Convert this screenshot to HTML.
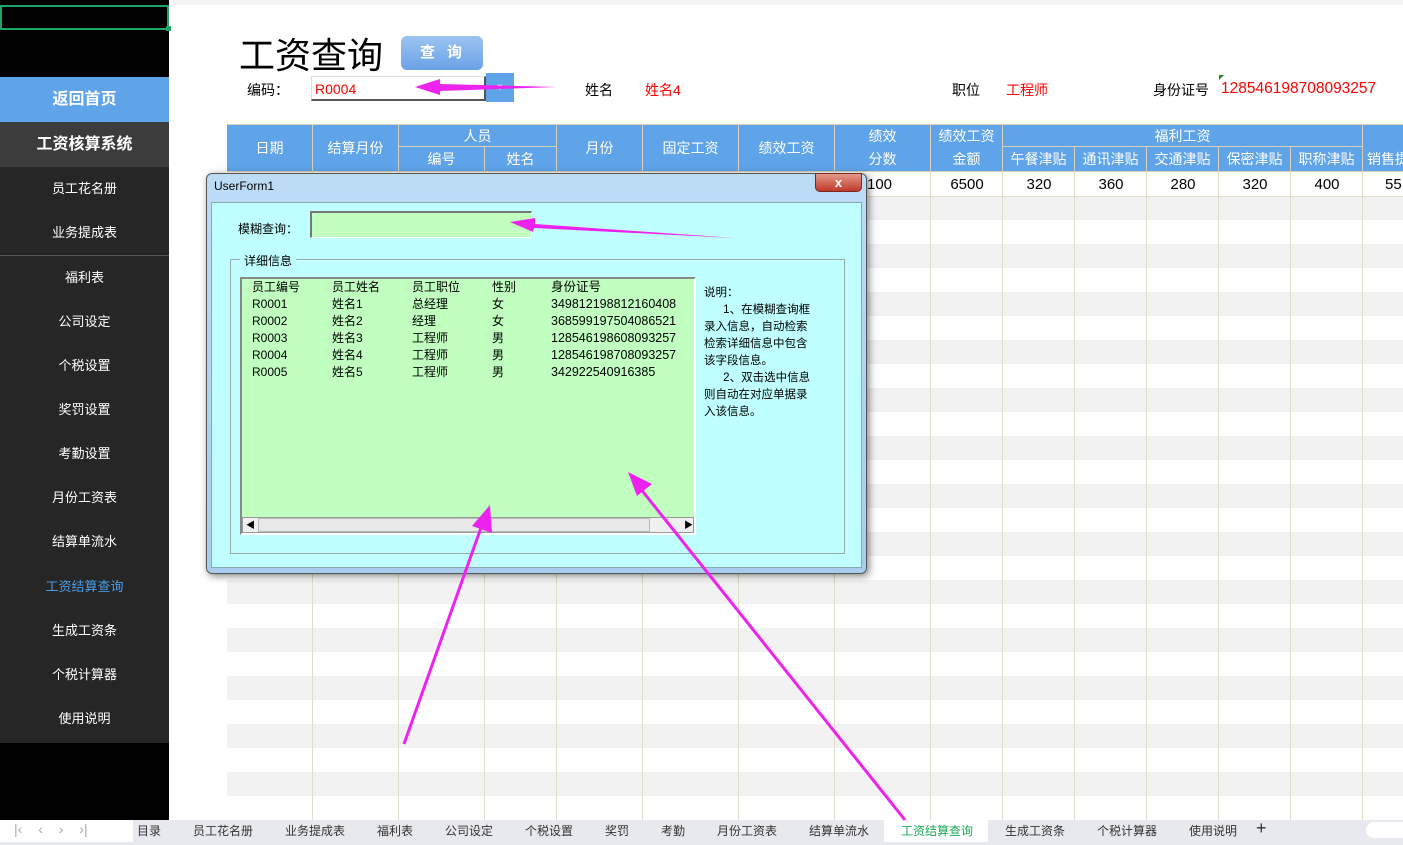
<!DOCTYPE html><html><head><meta charset="utf-8"><style>
*{margin:0;padding:0;box-sizing:border-box}
body{width:1403px;height:845px;overflow:hidden;background:#fff;font-family:"Liberation Sans","Noto Sans CJK SC",sans-serif;position:relative}
.a{position:absolute}
.side{left:0;top:0;width:169px;height:820px;background:#000}
.mi{position:absolute;left:0;width:169px;height:44px;line-height:44px;text-align:center;color:#fff;font-size:13px;background:#262626}
.grid div{position:absolute}
.vl{top:172px;width:1px;height:648px;background:#e2dccb}
.hd{background:#5fa3e8;color:#fff;font-size:14px;text-align:center;border-right:1px solid #d8d0b8;border-bottom:1px solid #d8d0b8}
.dlg{left:206px;top:173px;width:661px;height:401px;background:linear-gradient(#bcdcf6,#a9cdee);border:1px solid #555;border-radius:6px;box-shadow:2px 2px 8px rgba(0,0,0,.5)}
.tab{position:absolute;top:822px;font-size:12px;color:#333}
</style></head><body>
<div class="a" style="left:0;top:0;width:1403px;height:5px;background:#f3f4f6"></div>
<div class="a side"></div>
<div class="a" style="left:0;top:5px;width:169px;height:25px;border:2px solid #21a366;background:#000"></div>
<div class="a" style="left:166px;top:26px;width:5px;height:5px;background:#21a366"></div>
<div class="mi" style="top:77px;height:45px;line-height:45px;background:#5fa3e8;font-size:16px;font-weight:bold">返回首页</div>
<div class="mi" style="top:122px;height:45px;line-height:45px;background:#3c3c3c;font-size:16px;font-weight:bold">工资核算系统</div>
<div class="mi" style="top:167px">员工花名册</div>
<div class="mi" style="top:211px">业务提成表</div>
<div class="a" style="left:0;top:255px;width:169px;height:1px;background:#555"></div>
<div class="mi" style="top:256px">福利表</div>
<div class="mi" style="top:300px">公司设定</div>
<div class="mi" style="top:344px">个税设置</div>
<div class="mi" style="top:388px">奖罚设置</div>
<div class="mi" style="top:432px">考勤设置</div>
<div class="mi" style="top:476px">月份工资表</div>
<div class="mi" style="top:520px">结算单流水</div>
<div class="mi" style="top:564px;height:45px;line-height:45px;color:#4a9ee8">工资结算查询</div>
<div class="mi" style="top:609px">生成工资条</div>
<div class="mi" style="top:653px">个税计算器</div>
<div class="mi" style="top:697px;height:46px">使用说明</div>

<div class="a" style="left:239px;top:27px;font-size:36px;color:#000">工资查询</div>
<div class="a" style="left:401px;top:36px;width:82px;height:34px;border-radius:6px;background:linear-gradient(#9cc4f2,#6aa2e6);color:#fff;font-size:15px;font-weight:bold;text-align:center;line-height:34px;letter-spacing:12px;padding-left:10px">查询</div>
<div class="a" style="left:247px;top:80px;font-size:14px">编码：</div>
<div class="a" style="left:311px;top:76px;width:175px;height:25px;border:1px solid #ddd;border-right:2px solid #555;border-bottom:2px solid #555;color:#f00;font-size:14px;padding:4px 3px">R0004</div>
<div class="a" style="left:486px;top:73px;width:28px;height:29px;background:#5fa3e8;color:#fff;font-size:9px;text-align:center;line-height:29px">▼</div>
<div class="a" style="left:585px;top:80px;font-size:14px">姓名</div>
<div class="a" style="left:645px;top:80px;font-size:14px;color:#f00">姓名4</div>
<div class="a" style="left:952px;top:80px;font-size:14px">职位</div>
<div class="a" style="left:1006px;top:80px;font-size:14px;color:#f00">工程师</div>
<div class="a" style="left:1153px;top:80px;font-size:14px">身份证号</div>
<div class="a" style="left:1219px;top:75px;width:0;height:0;border-top:5px solid #1a8a1a;border-right:5px solid transparent"></div>
<div class="a" style="left:1221px;top:80px;font-size:15.5px;color:#f00">128546198708093257</div>

<!-- grid -->
<div class="grid">
<div style="left:227px;top:172px;width:1176px;height:648px;background:repeating-linear-gradient(#fff 0 24px,#f2f2f2 24px 48px)"></div>
<div class="vl" style="left:312px"></div><div class="vl" style="left:398px"></div><div class="vl" style="left:484px"></div>
<div class="vl" style="left:556px"></div><div class="vl" style="left:642px"></div><div class="vl" style="left:738px"></div>
<div class="vl" style="left:834px"></div><div class="vl" style="left:930px"></div><div class="vl" style="left:1002px"></div>
<div class="vl" style="left:1074px"></div><div class="vl" style="left:1146px"></div><div class="vl" style="left:1218px"></div>
<div class="vl" style="left:1290px"></div><div class="vl" style="left:1362px"></div>
<div style="left:227px;top:196px;width:1176px;height:1px;background:#e2dccb"></div>
<div style="left:227px;top:124px;width:1176px;height:48px;background:#5fa3e8;border-top:1px solid #d8d0b8"></div>
<div class="hd" style="left:227px;top:125px;width:86px;height:47px;line-height:47px">日期</div>
<div class="hd" style="left:313px;top:125px;width:86px;height:47px;line-height:47px">结算月份</div>
<div class="hd" style="left:399px;top:125px;width:158px;height:22px;line-height:22px">人员</div>
<div class="hd" style="left:399px;top:147px;width:86px;height:25px;line-height:25px">编号</div>
<div class="hd" style="left:485px;top:147px;width:72px;height:25px;line-height:25px">姓名</div>
<div class="hd" style="left:557px;top:125px;width:86px;height:47px;line-height:47px">月份</div>
<div class="hd" style="left:643px;top:125px;width:96px;height:47px;line-height:47px">固定工资</div>
<div class="hd" style="left:739px;top:125px;width:96px;height:47px;line-height:47px">绩效工资</div>
<div class="hd" style="left:835px;top:125px;width:96px;height:47px;line-height:23px">绩效<br>分数</div>
<div class="hd" style="left:931px;top:125px;width:72px;height:47px;line-height:23px">绩效工资<br>金额</div>
<div class="hd" style="left:1003px;top:125px;width:360px;height:22px;line-height:22px">福利工资</div>
<div class="hd" style="left:1003px;top:147px;width:72px;height:25px;line-height:25px">午餐津贴</div>
<div class="hd" style="left:1075px;top:147px;width:72px;height:25px;line-height:25px">通讯津贴</div>
<div class="hd" style="left:1147px;top:147px;width:72px;height:25px;line-height:25px">交通津贴</div>
<div class="hd" style="left:1219px;top:147px;width:72px;height:25px;line-height:25px">保密津贴</div>
<div class="hd" style="left:1291px;top:147px;width:72px;height:25px;line-height:25px">职称津贴</div>
<div class="hd" style="left:1363px;top:147px;width:60px;height:25px;line-height:25px;text-align:left;padding-left:4px">销售提</div>
<div style="left:867px;top:176px;font-size:15px">100</div>
<div style="left:931px;top:176px;width:72px;text-align:center;font-size:15px">6500</div>
<div style="left:1003px;top:176px;width:72px;text-align:center;font-size:15px">320</div>
<div style="left:1075px;top:176px;width:72px;text-align:center;font-size:15px">360</div>
<div style="left:1147px;top:176px;width:72px;text-align:center;font-size:15px">280</div>
<div style="left:1219px;top:176px;width:72px;text-align:center;font-size:15px">320</div>
<div style="left:1291px;top:176px;width:72px;text-align:center;font-size:15px">400</div>
<div style="left:1385px;top:176px;font-size:15px">55</div>
</div>

<!-- dialog -->
<div class="a dlg"></div>
<div class="a" style="left:214px;top:179px;font-size:12px;color:#000">UserForm1</div>
<div class="a" style="left:815px;top:173px;width:47px;height:19px;border-radius:0 0 5px 5px;background:linear-gradient(#e39a8a,#c0392b);border:1px solid #7a2a20;color:#fff;font-weight:bold;font-size:13px;text-align:center;line-height:17px">x</div>
<div class="a" style="left:211px;top:202px;width:651px;height:366px;background:#c0ffff;border:1px solid #8aa"></div>
<div class="a" style="left:238px;top:220px;font-size:12px">模糊查询：</div>
<div class="a" style="left:310px;top:211px;width:222px;height:27px;background:#c0ffc0;border:1px solid #fff;border-top:2px solid #777;border-left:2px solid #777"></div>
<div class="a" style="left:230px;top:259px;width:615px;height:295px;border:1px solid #9aa"></div>
<div class="a" style="left:240px;top:252px;font-size:12px;background:#c0ffff;padding:0 4px">详细信息</div>
<div class="a" style="left:240px;top:277px;width:456px;height:258px;background:#c0ffc0;border:2px solid #888;border-right-color:#fff;border-bottom-color:#fff"></div>
<div class="a" style="left:252px;top:279px;font-size:12px;line-height:17px;white-space:pre">员工编号
R0001
R0002
R0003
R0004
R0005</div>
<div class="a" style="left:332px;top:279px;font-size:12px;line-height:17px;white-space:pre">员工姓名
姓名1
姓名2
姓名3
姓名4
姓名5</div>
<div class="a" style="left:412px;top:279px;font-size:12px;line-height:17px;white-space:pre">员工职位
总经理
经理
工程师
工程师
工程师</div>
<div class="a" style="left:492px;top:279px;font-size:12px;line-height:17px;white-space:pre">性别
女
女
男
男
男</div>
<div class="a" style="left:551px;top:279px;font-size:12.5px;line-height:17px;white-space:pre">身份证号
349812198812160408
368599197504086521
128546198608093257
128546198708093257
342922540916385</div>
<div class="a" style="left:242px;top:517px;width:452px;height:16px;background:#f0f0f0;border:1px solid #999"></div>
<div class="a" style="left:246px;top:518px;font-size:9px">◀</div>
<div class="a" style="left:684px;top:518px;font-size:9px">▶</div>
<div class="a" style="left:258px;top:518px;width:392px;height:14px;background:#e8e8e8;border:1px solid #bbb"></div>
<div class="a" style="left:704px;top:285px;font-size:11.5px;line-height:17px;width:114px;white-space:pre">说明：
      1、在模糊查询框
录入信息，自动检索
检索详细信息中包含
该字段信息。
      2、双击选中信息
则自动在对应单据录
入该信息。</div>

<!-- tabs -->
<div class="a" style="left:0;top:820px;width:1403px;height:25px;background:#e8e9ee"></div>
<div class="a" style="left:0;top:820px;width:133px;height:22px;background:#fff"></div>
<div class="a" style="left:14px;top:821px;font-size:14px;color:#aaa;word-spacing:12px">|‹ ‹ › ›|</div>
<div class="a" style="left:884px;top:820px;width:104px;height:22px;background:#fff"></div>
<div class="tab" style="left:137px">目录</div>
<div class="tab" style="left:193px">员工花名册</div>
<div class="tab" style="left:285px">业务提成表</div>
<div class="tab" style="left:377px">福利表</div>
<div class="tab" style="left:445px">公司设定</div>
<div class="tab" style="left:525px">个税设置</div>
<div class="tab" style="left:605px">奖罚</div>
<div class="tab" style="left:661px">考勤</div>
<div class="tab" style="left:717px">月份工资表</div>
<div class="tab" style="left:809px">结算单流水</div>
<div class="tab" style="left:901px;color:#1aaa55">工资结算查询</div>
<div class="tab" style="left:1005px">生成工资条</div>
<div class="tab" style="left:1097px">个税计算器</div>
<div class="tab" style="left:1189px">使用说明</div>
<div class="tab" style="left:1256px;font-size:18px;top:818px">+</div>
<div class="a" style="left:1366px;top:822px;width:37px;height:16px;background:#fff;border-radius:8px 0 0 8px"></div>

<svg class="a" style="left:0;top:0" width="1403" height="845">
<g fill="#ee22ee" stroke="#ee22ee">
<polygon points="557,87 440,84 440,79 415,87 440,95 440,91" stroke="none"/>
<polygon points="735,238 535,224 535,218 510,222 533,232 534,228" stroke="none"/>
<line x1="404" y1="744" x2="482" y2="525" stroke-width="3"/>
<polygon points="490,505 492,533 472,526" stroke="none"/>
<line x1="905" y1="820" x2="640" y2="488" stroke-width="3"/>
<polygon points="628,472 652,484 637,496" stroke="none"/>
</g></svg>
</body></html>
